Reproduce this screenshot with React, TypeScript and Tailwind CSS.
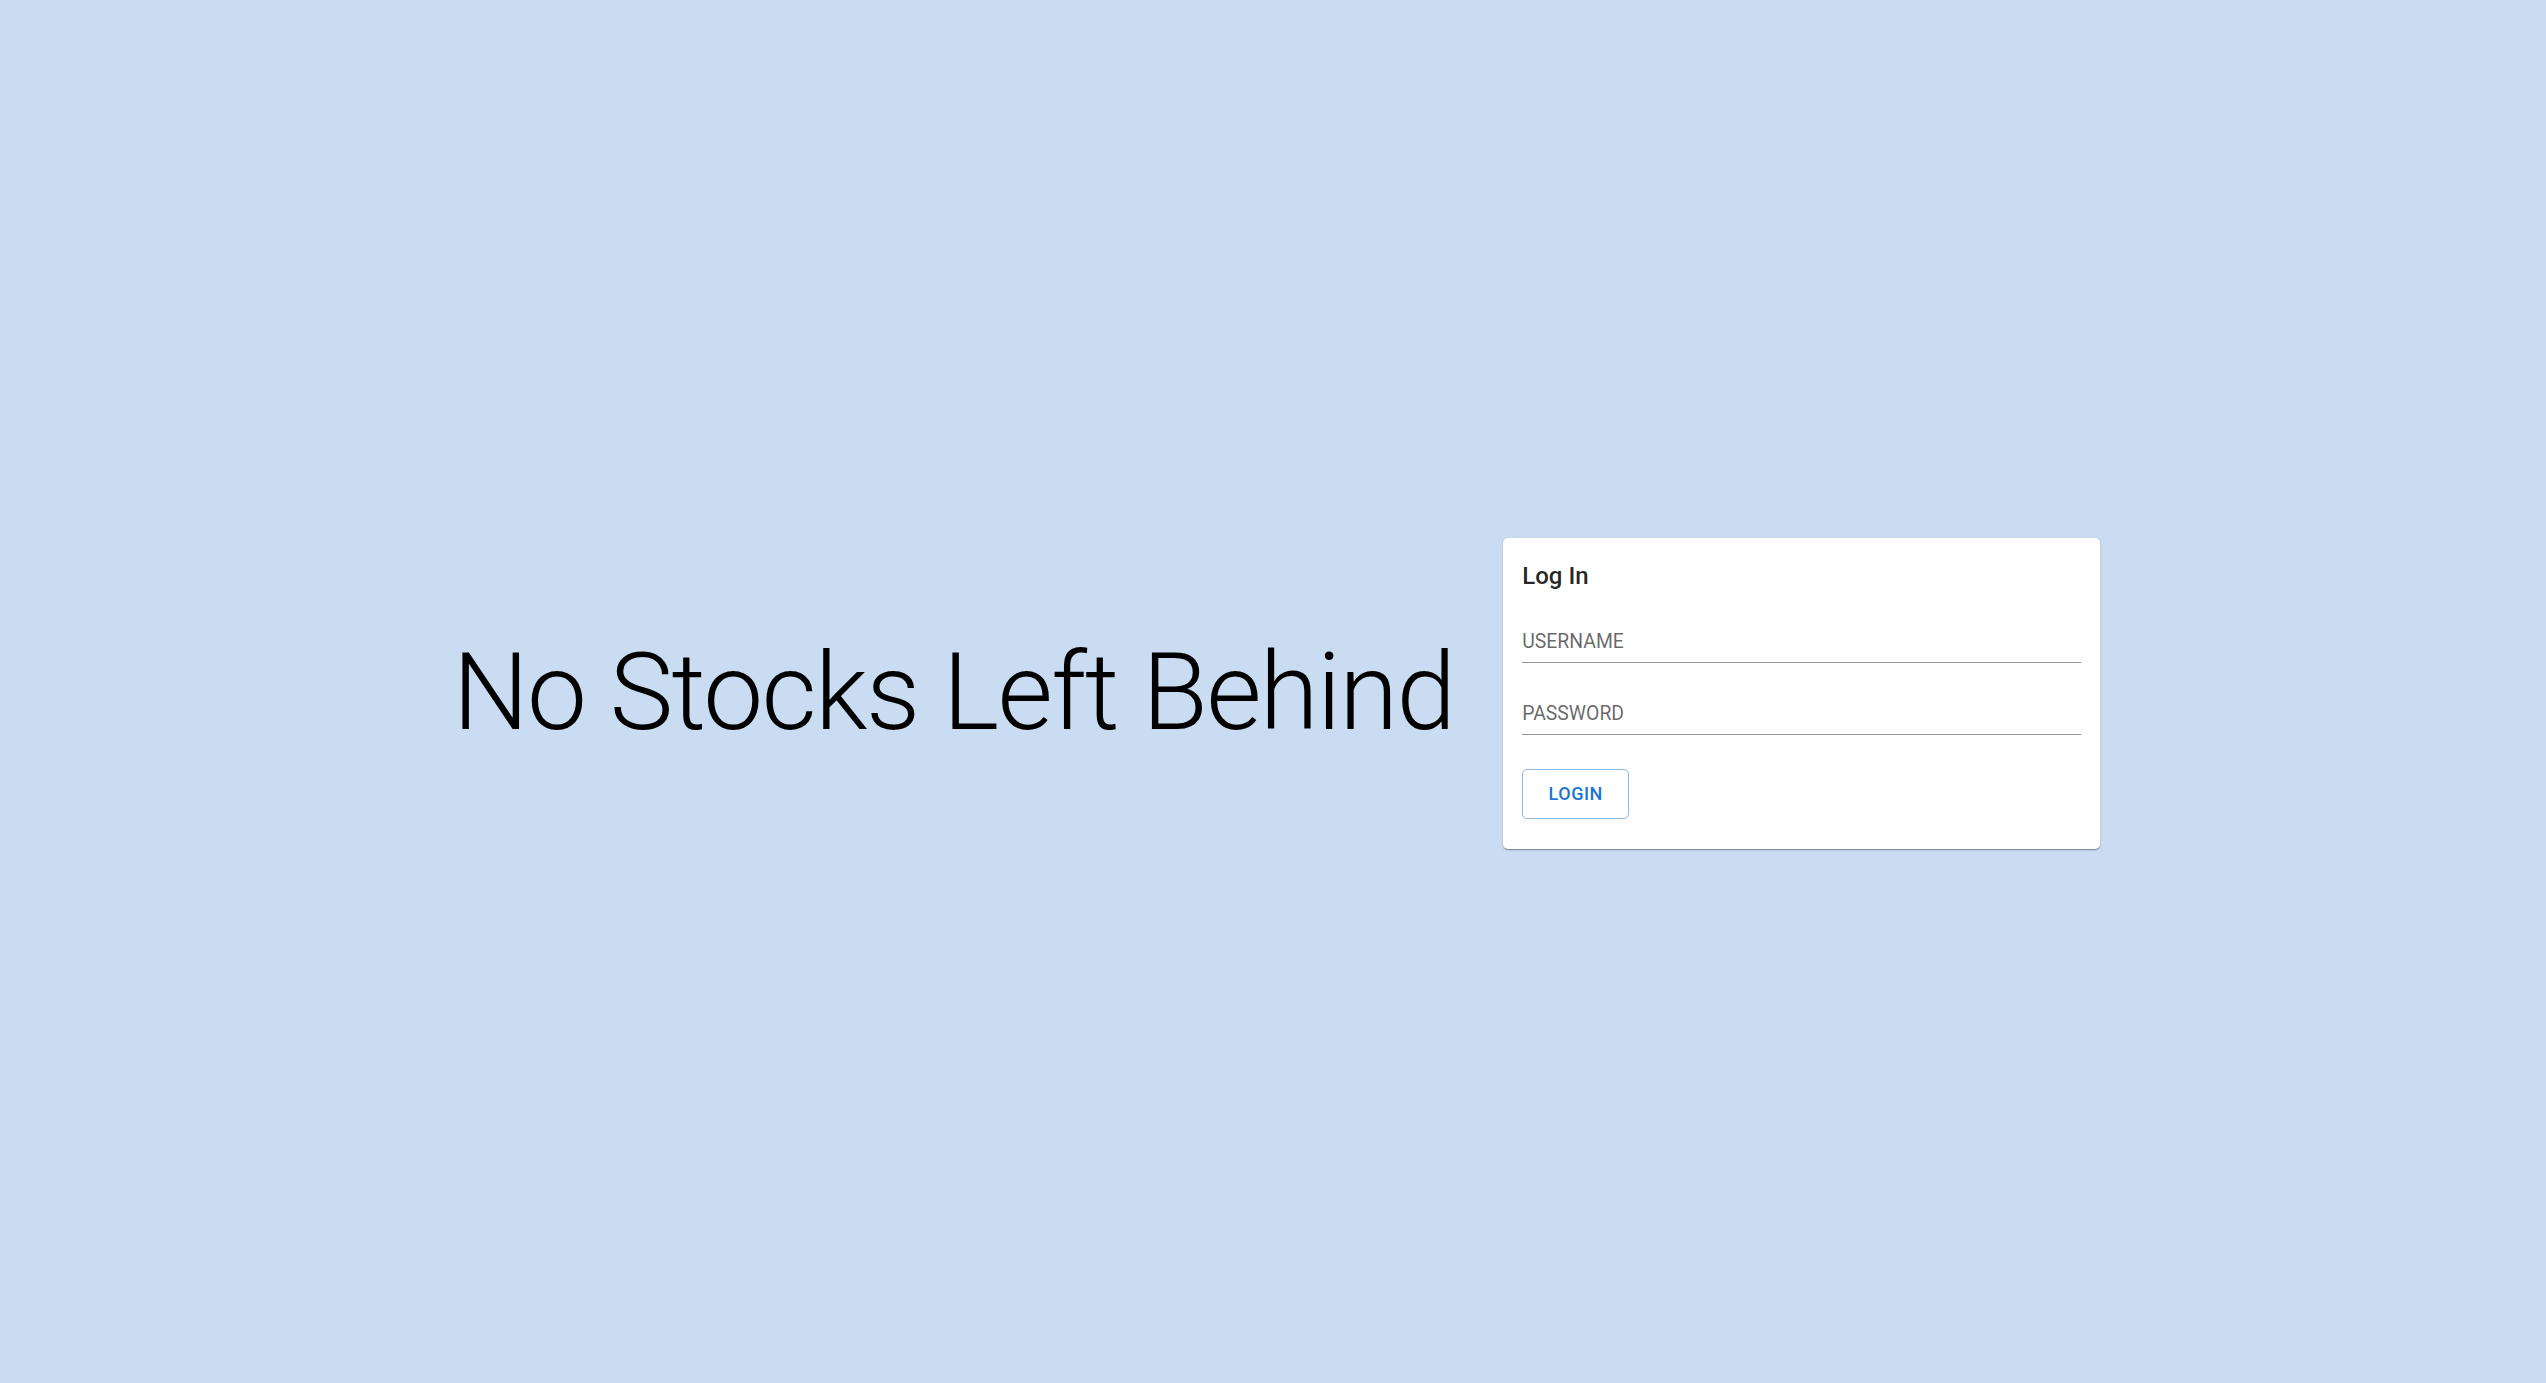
export default function App() {
  return (
    <main
      className="flex min-h-screen w-full items-center justify-center gap-[49px] bg-[#cadcf1] pt-[3px] pl-[7px]"
      style={{ fontFamily: "Roboto, 'Liberation Sans', sans-serif" }}
    >
      <h1 className="text-[107px] font-light leading-[1.167] tracking-[-0.01562em] text-black">
        No Stocks Left Behind
      </h1>

      <div className="w-[597px] rounded-[5px] bg-white px-[19px] pt-[22px] pb-[30px] shadow-[0px_2px_1px_-1px_rgba(0,0,0,0.2),0px_1px_1px_0px_rgba(0,0,0,0.14),0px_1px_3px_0px_rgba(0,0,0,0.12)]">
        <h2 className="text-[24px] font-medium leading-[32px] text-[rgba(0,0,0,0.87)]">
          Log In
        </h2>

        <div className="mt-[38px] border-b border-[#949494] pb-[8px]">
          <span className="block text-[19.4px] leading-[24px] text-[rgba(0,0,0,0.6)]">
            USERNAME
          </span>
        </div>

        <div className="mt-[39px] border-b border-[#949494] pb-[8px]">
          <span className="block text-[19.4px] leading-[24px] text-[rgba(0,0,0,0.6)]">
            PASSWORD
          </span>
        </div>

        <button
          type="button"
          className="mt-[34px] flex h-[50px] w-[107px] items-center justify-center rounded-[5px] border border-[#8cbae8] text-[18px] font-medium tracking-[0.03em] text-[#1976d2]"
        >
          LOGIN
        </button>
      </div>
    </main>
  );
}
